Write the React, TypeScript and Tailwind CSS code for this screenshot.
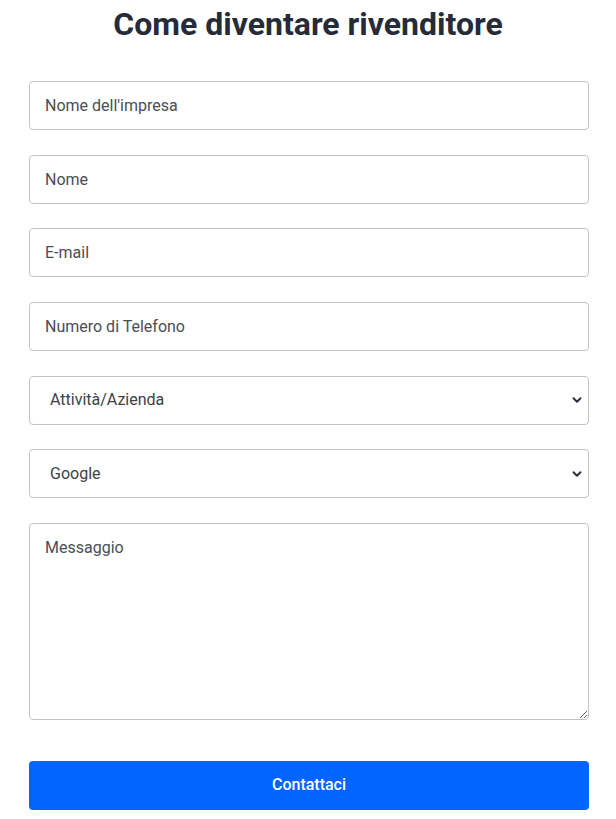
import { ChevronDown } from 'lucide-react';

const inputClass =
  'block w-full h-[49px] rounded-[4px] border border-[#c3c3cc] bg-white px-[15px] text-base text-[#3d4149] placeholder:text-[#4a4e55] outline-none';

function SelectField({ options }: { options: string[] }) {
  return (
    <div className="relative">
      <select
        className="block w-full h-[49px] appearance-none rounded-[4px] border border-[#c3c3cc] bg-white pl-5 pr-8 text-base text-[#3d4149] outline-none"
        defaultValue={options[0]}
      >
        {options.map((o) => (
          <option key={o}>{o}</option>
        ))}
      </select>
      <ChevronDown
        size={14}
        strokeWidth={3.5}
        className="pointer-events-none absolute right-[5px] top-1/2 -translate-y-1/2 text-[#2f3340]"
      />
    </div>
  );
}

export default function App() {
  return (
    <div
      className="min-h-screen bg-white"
      style={{ fontFamily: 'Roboto, "Noto Sans", sans-serif' }}
    >
      <div className="ml-[29px] w-[560px] pt-[4px]">
        <h1 className="pr-[2px] text-center text-[32px] font-bold leading-[40px] text-[#262b39]">
          Come diventare rivenditore
        </h1>

        <form className="mt-[37px] flex flex-col gap-[24.67px]" onSubmit={(e) => e.preventDefault()}>
          <input className={inputClass} placeholder="Nome dell'impresa" />
          <input className={inputClass} placeholder="Nome" />
          <input className={inputClass} placeholder="E-mail" />
          <input className={inputClass} placeholder="Numero di Telefono" />
          <SelectField options={['Attività/Azienda', 'Privato']} />
          <SelectField options={['Google', 'Facebook', 'Instagram', 'Passaparola']} />
          <textarea
            className="block w-full h-[197px] rounded-[4px] border border-[#c3c3cc] bg-white px-[15px] py-[12px] text-base text-[#3d4149] placeholder:text-[#4a4e55] outline-none"
            placeholder="Messaggio"
          />
          <button
            type="submit"
            className="mt-[16px] h-[49px] w-full rounded-[4px] bg-[#0364ff] text-base font-medium text-white"
          >
            Contattaci
          </button>
        </form>
      </div>
    </div>
  );
}
